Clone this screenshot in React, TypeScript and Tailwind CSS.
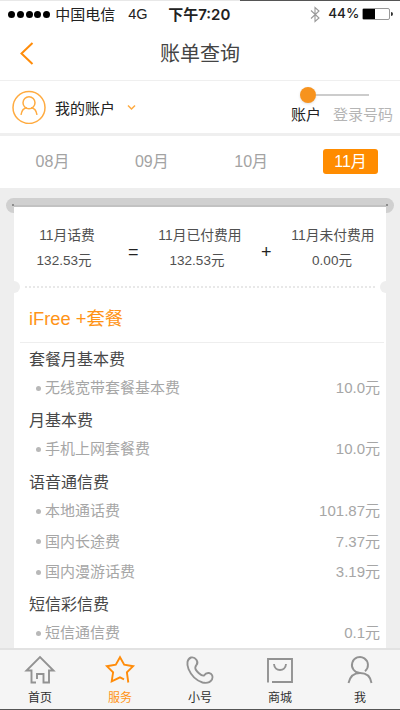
import type { ReactNode } from "react"

const months = [
    { label: "08月", active: false },
    { label: "09月", active: false },
    { label: "10月", active: false },
    { label: "11月", active: true },
]

const groups = [
    { title: "套餐月基本费", height: "h-[61px]", items: [{ name: "无线宽带套餐基本费", price: "10.0元" }] },
    { title: "月基本费", height: "h-[62px]", items: [{ name: "手机上网套餐费", price: "10.0元" }] },
    {
        title: "语音通信费",
        height: "h-[122px]",
        items: [
            { name: "本地通话费", price: "101.87元" },
            { name: "国内长途费", price: "7.37元" },
            { name: "国内漫游话费", price: "3.19元" },
        ],
    },
    { title: "短信彩信费", height: "h-[61px]", items: [{ name: "短信通信费", price: "0.1元" }] },
]

function StatusBar() {
    return (
        <div className="shrink-0">
            <div className="flex h-px bg-[#e8e8e8]">
                <span className="ml-auto w-[160px] bg-[#555]" />
            </div>
            <div className="flex h-[26px] items-center text-[15px] leading-none text-[#222]">
                <div className="ml-2 flex gap-[1.8px]">
                    {[0, 1, 2, 3, 4].map((dot) => (
                        <span key={dot} className="size-[7px] rounded-full bg-black" />
                    ))}
                </div>
                <span className="ml-[5px] w-[73px]">中国电信</span>
                <span className="w-[40px] text-[14.5px]">4G</span>
                <span className="w-[142px] font-['Inter','Noto_Sans_CJK_SC',sans-serif] text-[15px] font-semibold">下午7:20</span>
                <svg width="10" height="17" viewBox="0 0 10 17" fill="none" stroke="#999" strokeWidth="1.1">
                    <path d="M1 4.5 9 12 5 15.5V1.5L9 5 1 12.5" />
                </svg>
                <span className="ml-[8px] w-[34px] font-['Inter',sans-serif] text-[13.5px] font-medium">44%</span>
                <div className="flex h-[12px] w-[28px] rounded-[2px] border border-[#999]">
                    <span className="h-full w-[12px] bg-black" />
                </div>
                <span className="ml-px h-[4px] w-[1.5px] rounded-r bg-[#333]" />
            </div>
        </div>
    )
}

function Header() {
    return (
        <div className="grid h-[54px] shrink-0 grid-cols-[60px_1fr_60px] items-center border-b border-[#efefef]">
            <svg className="ml-[19px]" width="16" height="24" viewBox="0 0 16 24" fill="none" stroke="#ff8c0a" strokeWidth="2">
                <path d="M13.5 1 2.5 11.5l11 10.5" />
            </svg>
            <h1 className="text-center text-[20px] leading-none text-[#444]">账单查询</h1>
        </div>
    )
}

function AccountRow() {
    return (
        <div className="flex h-[52px] shrink-0 items-center">
            <svg className="ml-[12px]" width="34" height="34" viewBox="0 0 34 34" fill="none" stroke="#ffab40" strokeWidth="1.5">
                <circle cx="17" cy="17.5" r="16" />
                <path d="M9 24.8c.7-4.200 3.400-6.800 6-7M25 24.800c-.7-4.200-3.400-6.800-6-7" />
                <circle cx="17" cy="12.8" r="6" />
            </svg>
            <span className="mt-[2px] ml-[9px] text-[15px] leading-none text-[#222]">我的账户</span>
            <svg className="ml-[12px]" width="9" height="7" viewBox="0 0 9 7" fill="none" stroke="#ffab40" strokeWidth="1.5">
                <path d="M1 1.5 4.5 5 8 1.5" />
            </svg>
            <div className="mr-[7px] mb-[5px] ml-auto w-[102px]">
                <div className="ml-[9px] flex h-[16px] items-center">
                    <span className="size-[16px] rounded-full bg-[#f7931e] shadow-sm" />
                    <span className="h-[2px] w-[53px] bg-[#ccc]" />
                </div>
                <div className="mt-[4px] flex justify-between text-[15px] leading-none">
                    <span className="text-[#222]">账户</span>
                    <span className="text-[#b5b5b5]">登录号码</span>
                </div>
            </div>
        </div>
    )
}

function MonthTabs() {
    return (
        <div className="flex h-[55px] shrink-0 justify-between border-t-3 border-[#efefef] pt-[13px] pr-[22px] pl-[25px]">
            {months.map(({ label, active }) => (
                <span
                    key={label}
                    className={
                        active
                            ? "flex h-[25px] w-[55px] items-center justify-center rounded-[3px] bg-[#ff8c00] text-[16px] text-white"
                            : "flex h-[25px] w-[55px] items-center justify-center text-[16px] text-[#a3a3a3]"
                    }
                >
                    {label}
                </span>
            ))}
        </div>
    )
}

function Amount({ title, value, className }: { title: string; value: string; className: string }) {
    return (
        <div className={`flex flex-col items-center whitespace-nowrap text-[13.8px] leading-[25px] text-[#505050] ${className}`}>
            <span>{title}</span>
            <span className="text-[13.5px]">{value}</span>
        </div>
    )
}

function Bill() {
    return (
        <div className="flex min-h-0 flex-1 flex-col bg-[#eee] px-[6px] pt-[10px]">
            <div className="relative h-[15px] shrink-0 rounded-full bg-[#d0d0d0]">
                <span className="absolute inset-x-[8px] top-[7px] h-[2px] bg-[#c2c2c2]" />
                <span className="absolute top-[6px] left-[6px] size-[2px] rounded-full bg-[#777]" />
                <span className="absolute top-[6px] right-[6px] size-[2px] rounded-full bg-[#777]" />
            </div>
            <div className="relative mx-[8px] -mt-[6px] flex-1 overflow-hidden bg-white">
                <div className="flex h-[74px] pt-[16px]">
                    <Amount title="11月话费" value="132.53元" className="ml-[25px] w-[56px] [&>span:last-child]:mr-[6px]" />
                    <span className="mt-[20px] w-[63px] pl-[33px] text-[18px] leading-none font-medium text-[#222]">=</span>
                    <Amount title="11月已付费用" value="132.53元" className="w-[84px] [&>span:last-child]:mr-[6px]" />
                    <span className="mt-[20px] w-[49px] pl-[19px] text-[18px] leading-none font-medium text-[#222]">+</span>
                    <Amount title="11月未付费用" value="0.00元" className="w-[84px] [&>span:last-child]:mr-[2px]" />
                </div>
                <div className="-mx-[6px] flex h-[12px] items-center justify-between">
                    <span className="size-[12px] rounded-full bg-[#eee]" />
                    <span className="h-0 w-[350px] border-t-2 border-dotted border-[#e8e8e8]" />
                    <span className="size-[12px] rounded-full bg-[#eee]" />
                </div>
                <h2 className="mr-[2px] ml-[6px] h-[50px] border-b border-[#eee] pt-[7px] pl-[9px] text-[18.3px] leading-[38px] text-[#ff9416]">
                    iFree +套餐
                </h2>
                {groups.map(({ title, height, items }) => (
                    <section key={title} className={`pr-[6px] pl-[15px] ${height}`}>
                        <h3 className="h-[30px] text-[16px] leading-[34px] text-[#484848]">{title}</h3>
                        {items.map(({ name, price }) => (
                            <div key={name} className="flex h-[30.5px] items-center text-[15px] text-[#a6a6a6]">
                                <span className="mr-[4px] ml-[7px] size-[5px] rounded-full bg-[#b8b8b8]" />
                                <span>{name}</span>
                                <span className="ml-auto">{price}</span>
                            </div>
                        ))}
                    </section>
                ))}
            </div>
        </div>
    )
}

function Tab({ label, active, children }: { label: string; active?: boolean; children: ReactNode }) {
    return (
        <div className={active ? "flex flex-col items-center text-[#ff9416]" : "flex flex-col items-center text-[#2f2f2f]"}>
            <svg width="32" height="32" viewBox="0 0 32 32" fill="none" stroke={active ? "#ff8c0a" : "#929292"} strokeWidth="1.9">
                {children}
            </svg>
            <span className="mt-[6px] text-[12px] leading-none">{label}</span>
        </div>
    )
}

function TabBar() {
    return (
        <nav className="grid h-[62px] shrink-0 grid-cols-5 border-t-2 border-b border-t-[#e2e2e2] border-b-[#555] bg-[#f5f5f5] pt-[4px]">
            <Tab label="首页">
                <path d="M12 28.5H7.5V16.5H2.5L16 3 29.5 16.5H25V28.5H19.5V20H13V25" />
            </Tab>
            <Tab label="服务" active>
                <path d="M24.3 28.5 22.9 18.4 29.1 12.2 20.2 10.6 16 3.2 11.8 10.6 2.9 12.2 9.1 18.4 7.7 27.4 16 23.3 20 25.3" />
            </Tab>
            <Tab label="小号">
                <path d="M12.5 11C15 8 11.500 2.500 7 3.500 3 5 2.500 10 4.500 15c2.500 6 8 11.500 14 13.500 4 1 7.500 0 9.500-3 1.500-3 0-6-3-6.500-3-.5-4 1-5 2.500C17.500 22.500 11 16.500 11.300 13.500c.1-1 .5-1.700 1.200-2.500" />
            </Tab>
            <Tab label="商城">
                <path d="M4 28.5V5h24v23H8M10 10c.5 8 11.5 8 12 0" />
            </Tab>
            <Tab label="我">
                <path d="M21 17.2A8 8 0 1 0 16 19c-6 0-10 3.500-11.500 10M16 19c6.500 0 10.500 3.500 11.500 10" />
            </Tab>
        </nav>
    )
}

export default function App() {
    return (
        <div className="flex h-[710px] w-[400px] flex-col overflow-hidden bg-white font-['Liberation_Sans','Noto_Sans_CJK_SC',sans-serif]">
            <StatusBar />
            <Header />
            <AccountRow />
            <MonthTabs />
            <Bill />
            <TabBar />
        </div>
    )
}
